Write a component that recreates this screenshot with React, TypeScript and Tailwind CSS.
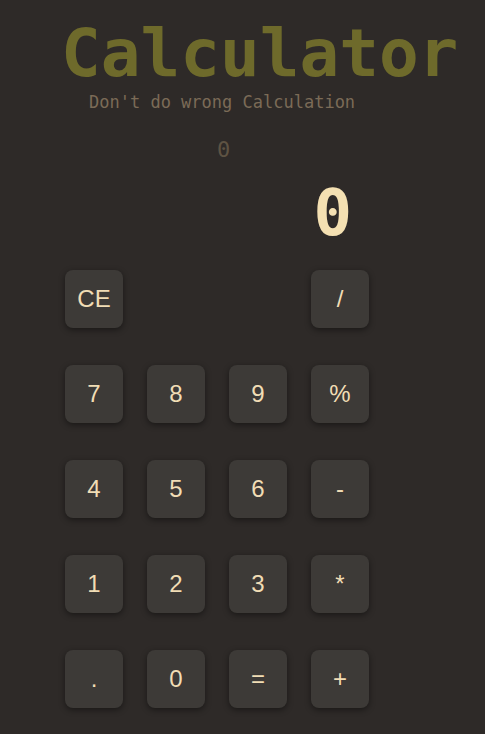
import { useState } from 'react';

const keys = [
  ['CE', '', '', '/'],
  ['7', '8', '9', '%'],
  ['4', '5', '6', '-'],
  ['1', '2', '3', '*'],
  ['.', '0', '=', '+'],
];

export default function App() {
  const [expr, setExpr] = useState('0');
  const [result, setResult] = useState('0');

  const press = (k: string) => {
    if (k === 'CE') {
      setExpr('0');
      setResult('0');
      return;
    }
    if (k === '=') {
      try {
        const v = Function(`return (${expr})`)();
        setResult(String(v));
      } catch {
        setResult('Error');
      }
      return;
    }
    setExpr(expr === '0' ? k : expr + k);
  };

  return (
    <div className="w-[485px] h-[734px] overflow-hidden bg-[#2e2a28]">
      <h1 className="mt-[21px] pl-[61px] font-['DejaVu_Sans_Mono',monospace] text-[66px] leading-none font-bold text-[#6e6a2b] whitespace-nowrap">
        Calculator
      </h1>
      <p className="mt-[7px] pl-[89px] font-['DejaVu_Sans_Mono',monospace] text-[17px] leading-none text-[#7b6b57]">
        Don't do wrong Calculation
      </p>
      <div className="mt-[28px] pl-[217px] font-['DejaVu_Sans_Mono',monospace] text-[22px] leading-none text-[#5e5343]">
        {expr}
      </div>
      <div className="mt-[20px] w-[352px] text-right font-['DejaVu_Sans_Mono',monospace] text-[64px] leading-none font-bold text-[#f4e0b2]">
        {result}
      </div>
      <div className="mt-[25px] ml-[65px] grid grid-cols-[58px_58px_58px_58px] gap-x-[24px] gap-y-[37px]">
        {keys.flat().map((k, i) =>
          k === '' ? (
            <div key={i} />
          ) : (
            <button
              key={i}
              onClick={() => press(k)}
              className="h-[58px] w-[58px] rounded-lg bg-[#3d3a37] font-['Liberation_Sans',Arial,sans-serif] text-[24px] text-[#f1ddb5] shadow-[0_2px_6px_rgba(0,0,0,0.45)]"
            >
              {k}
            </button>
          )
        )}
      </div>
    </div>
  );
}
